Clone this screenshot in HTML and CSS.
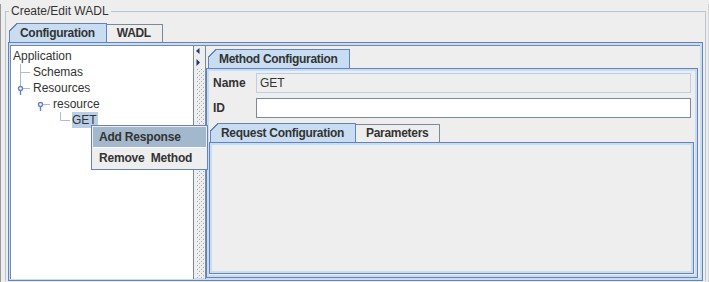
FILE: index.html
```html
<!DOCTYPE html>
<html lang="en">
<head>
    <meta charset="UTF-8" />
    <title>Create/Edit WADL</title>
    <link rel="stylesheet" href="styles.css">
</head>
<body>
    <div class="dialog">
        <fieldset class="group">
            <legend>Create/Edit WADL</legend>
            <div class="tabs outer">
                <div class="tab-row">
                    <span class="tab selected">Configuration</span>
                    <span class="tab">WADL</span>
                </div>
                <div class="tab-body">
                    <div class="split">
                        <div class="tree">
                            <div class="node"><span class="label">Application</span></div>
                            <div class="node">
                                <svg class="conn" width="20" height="16"><path d="M8.5 0V16M8.5 8.5H18" /></svg>
                                <span class="label">Schemas</span>
                            </div>
                            <div class="node">
                                <svg class="conn" width="20" height="16"><path d="M8.5 0V6M11 8.5H18" /><circle cx="8.5" cy="8.5" r="2" class="knob" /><path d="M8.5 10.5V15" class="stem" /></svg>
                                <span class="label">Resources</span>
                            </div>
                            <div class="node depth2">
                                <svg class="conn" width="20" height="16"><path d="M11 8.5H18" /><circle cx="8.5" cy="8.5" r="2" class="knob" /><path d="M8.5 10.5V15" class="stem" /></svg>
                                <span class="label">resource</span>
                            </div>
                            <div class="node depth3">
                                <svg class="conn" width="20" height="16"><path d="M8.5 0V8.5H18" /></svg>
                                <span class="label picked">GET</span>
                            </div>
                        </div>
                        <div class="divider">
                            <svg class="arrows" width="6" height="20"><path d="M4.5 1V7L1 4Z M1.5 12V19L5 15.5Z" /></svg>
                            <div class="bumps"></div>
                        </div>
                        <div class="detail">
                            <div class="tabs inner">
                                <div class="tab-row">
                                    <span class="tab selected">Method Configuration</span>
                                </div>
                                <div class="tab-body">
                                    <div class="form">
                                        <div class="field-row">
                                            <span class="field-label">Name</span>
                                            <div class="field disabled">GET</div>
                                        </div>
                                        <div class="field-row">
                                            <span class="field-label">ID</span>
                                            <div class="field"></div>
                                        </div>
                                    </div>
                                    <div class="tabs sub">
                                        <div class="tab-row">
                                            <span class="tab selected">Request Configuration</span>
                                            <span class="tab">Parameters</span>
                                        </div>
                                        <div class="tab-body"></div>
                                    </div>
                                </div>
                            </div>
                        </div>
                    </div>
                </div>
            </div>
        </fieldset>

        <div class="popup">
            <div class="menu-item hot">Add Response</div>
            <div class="menu-item">Remove  Method</div>
        </div>
    </div>
</body>
</html>
```

FILE: styles.css
```css
body {
    margin: 0;
    background-color: #eeeeee;
    font-family: "Liberation Sans", Arial, sans-serif;
    font-size: 12px;
    color: #333333;
}
.dialog {
    position: relative;
    width: 709px;
    height: 282px;
    box-sizing: border-box;
    border-bottom: 1px solid #808080;
    border-left: 1px solid #9a9a9a;
    border-right: 1px solid #d4d4d4;
}
.group {
    margin: 4px 2px 0 4px;
    padding: 5px 2px 0 2px;
    height: 277px;
    box-sizing: border-box;
    border: 1px solid #b8c6d4;
    border-bottom: none;
    display: flex;
    flex-direction: column;
}
.group legend {
    margin-left: 1px;
    padding: 0 2px;
    line-height: 14px;
}

/* tabs */
.tabs {
    display: flex;
    flex-direction: column;
    flex: 1;
}
.tab-row {
    display: flex;
    align-items: flex-end;
    padding-left: 1px;
    height: 19px;
}
.tab {
    position: relative;
    height: 18px;
    line-height: 18px;
    padding: 0 11px 0 10px;
    border: 1px solid #7a8a99;
    border-bottom: none;
    font-weight: bold;
    letter-spacing: -0.3px;
    color: #333333;
    white-space: nowrap;
}
.tab.selected {
    background-color: #c8ddf2;
    border-color: #6382bf;
}
.tab + .tab {
    height: 17px;
    line-height: 17px;
    border-left: none;
}
.tab::before {
    content: "";
    position: absolute;
    left: -1px;
    top: -1px;
    width: 8px;
    height: 8px;
    background: linear-gradient(135deg, #eeeeee 0 46%, #6382bf 46% 60%, transparent 60%);
}
.tab + .tab::before {
    display: none;
}
.tab-body {
    flex: 1;
    display: flex;
    flex-direction: column;
    border: 1px solid #6382bf;
    background-color: #eeeeee;
    box-shadow: inset 0 0 0 2px #c8ddf2;
}

.outer > .tab-body {
    padding: 2px 2px 1px 1px;
}
.split {
    flex: 1;
    display: flex;
    border-top: 1px solid #7a8a99;
    border-left: 1px solid #7a8a99;
}

/* tree */
.tree {
    width: 181px;
    background-color: #ffffff;
    border-right: 1px solid #7a8a99;
    padding: 2px 0 0 1px;
}
.node {
    display: flex;
    align-items: center;
    height: 16px;
}
.node .conn {
    flex: none;
}
.node .conn path {
    stroke: #a9bdd4;
    stroke-width: 1;
    fill: none;
}
.node .conn .knob {
    stroke: #6382bf;
    stroke-width: 1.4;
    fill: #ffffff;
}
.node .conn .stem {
    stroke: #6382bf;
    stroke-width: 1.4;
}
.node.depth2 {
    padding-left: 20px;
}
.node.depth3 {
    padding-left: 40px;
}
.label {
    line-height: 16px;
    padding: 0 1px;
}
.label.picked {
    background-color: #b8cfe5;
    padding: 0 1px 0 0;
}

/* split divider */
.divider {
    width: 10px;
    display: flex;
    flex-direction: column;
    padding-left: 1px;
    border-right: 1px solid #7a8a99;
}
.arrows {
    margin-top: 1px;
}
.arrows path {
    fill: #25356e;
}
.bumps {
    flex: 1;
    margin: 2px 1px 0 2px;
    background-image:
        conic-gradient(from 270deg at 1px 1px, #98a8bb 90deg, transparent 0),
        conic-gradient(from 270deg at 1px 1px, #98a8bb 90deg, transparent 0);
    background-size: 4px 4px;
    background-position: 0 0, 2px 2px;
}

/* method detail */
.detail {
    flex: 1;
    display: flex;
    flex-direction: column;
    padding: 3px 2px 1px 0;
}
.inner > .tab-row {
    padding-left: 2px;
}
.inner > .tab-body {
    padding: 4px 3px 3px 2px;
}
.form {
    padding: 0 3px 0 4px;
}
.field-row {
    display: flex;
    align-items: center;
    margin-bottom: 5px;
}
.field-label {
    width: 43px;
    font-weight: bold;
}
.field {
    flex: 1;
    height: 18px;
    line-height: 18px;
    padding: 0 3px;
    background-color: #ffffff;
    border: 1px solid #7a8a99;
}
.field.disabled {
    background-color: #eeeeee;
    border-color: #b8cfe5;
}
.sub > .tab-row {
    padding-left: 1px;
}

/* popup menu */
.popup {
    position: absolute;
    left: 90px;
    top: 121px;
    width: 113px;
    padding: 1px;
    background-color: #eeeeee;
    border: 1px solid #6382bf;
}
.menu-item {
    height: 20px;
    line-height: 20px;
    padding-left: 6px;
    font-weight: bold;
    letter-spacing: -0.2px;
    white-space: pre;
    border-bottom: 1px solid #ffffff;
}
.menu-item:last-child {
    border-bottom: none;
}
.menu-item.hot {
    background-color: #a3b8cc;
}
```
